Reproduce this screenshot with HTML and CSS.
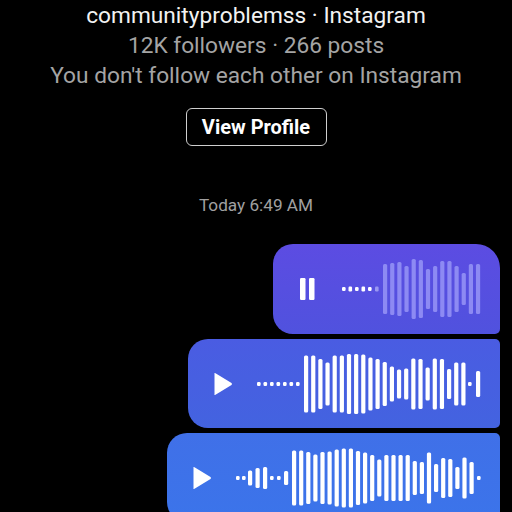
FILE: index.html
```html
<!DOCTYPE html>
<html>
<head>
<meta charset="utf-8">
<link rel="stylesheet" href="styles.css">
</head>
<body>
<div class="header">
  <div class="name">communityproblemss · Instagram</div>
  <div class="meta">12K followers · 266 posts</div>
  <div class="meta">You don't follow each other on Instagram</div>
  <div class="btn">View Profile</div>
  <div class="time">Today 6:49 AM</div>
</div>
<div class="thread">
  <div class="bubble b1">
    <svg class="icon" width="20" height="24" viewBox="0 0 20 24"><rect x="2" y="1" width="5.5" height="22" rx="1.2" fill="#fff"/><rect x="11" y="1" width="5.5" height="22" rx="1.2" fill="#fff"/></svg>
    <svg class="wave" id="w1" width="150" height="70" viewBox="0 0 150 70"></svg>
  </div>
  <div class="bubble b2">
    <svg class="icon" width="20" height="24" viewBox="0 0 20 24"><path d="M1.5 1.5 Q1 0.5 2.5 1.2 L18.5 11 Q19.5 12 18.5 13 L2.5 22.8 Q1 23.5 1.5 22.5 Z" fill="#fff"/></svg>
    <svg class="wave" id="w2" width="230" height="70" viewBox="0 0 230 70"></svg>
  </div>
  <div class="bubble b3">
    <svg class="icon" width="20" height="24" viewBox="0 0 20 24"><path d="M1.5 1.5 Q1 0.5 2.5 1.2 L18.5 11 Q19.5 12 18.5 13 L2.5 22.8 Q1 23.5 1.5 22.5 Z" fill="#fff"/></svg>
    <svg class="wave" id="w3" width="250" height="70" viewBox="0 0 250 70"></svg>
  </div>
</div>
<script src="app.js"></script>
</body>
</html>
```
FILE: styles.css
```css
html, body {
  margin: 0;
  padding: 0;
  background: #000;
  width: 512px;
  height: 512px;
  overflow: hidden;
  font-family: Roboto, "Liberation Sans", sans-serif;
}
.header {
  display: flex;
  flex-direction: column;
  align-items: center;
  padding-top: 1px;
}
.name {
  color: #f2f2f2;
  font-size: 22.7px;
  line-height: 30px;
  white-space: nowrap;
}
.meta {
  color: #a4a4a4;
  font-size: 22.7px;
  line-height: 30px;
  white-space: nowrap;
}
.btn {
  margin-top: 17px;
  box-sizing: border-box;
  width: 141px;
  height: 38px;
  border: 1.5px solid #cfcfcf;
  border-radius: 6px;
  color: #fff;
  font-weight: bold;
  font-size: 20px;
  display: flex;
  align-items: center;
  justify-content: center;
}
.time {
  margin-top: 49px;
  color: #a0a0a0;
  font-size: 17.2px;
  line-height: 20px;
}
.thread {
  margin-top: 29px;
  display: flex;
  flex-direction: column;
  align-items: flex-end;
  padding-right: 12px;
  gap: 5px;
}
.bubble {
  box-sizing: border-box;
  height: 89px;
  display: flex;
  align-items: center;
  padding-left: 25px;
  border-radius: 20px 5px 5px 20px;
}
.b1 {
  width: 227px;
  height: 90px;
  border-radius: 20px 24px 5px 20px;
  background: linear-gradient(180deg, #5c4ce2 0%, #5052de 100%);
}
.b2 {
  width: 312px;
  background: linear-gradient(180deg, #4a5ce2 0%, #4363e0 100%);
}
.b3 {
  width: 333px;
  background: linear-gradient(180deg, #4070e8 0%, #3b74ea 100%);
}
.icon {
  flex: none;
}
.wave {
  flex: none;
  margin-left: 24px;
}
```
FILE: app.js
```js
function build(id, items, color) {
  var svg = document.getElementById(id);
  var ns = 'http://www.w3.org/2000/svg';
  var cy = 35;
  items.forEach(function (it) {
    var r = document.createElementNS(ns, 'rect');
    var h = it.h || 4;
    var w = it.d ? 3.6 : 4.2;
    r.setAttribute('x', it.x);
    r.setAttribute('y', cy - h / 2);
    r.setAttribute('width', w);
    r.setAttribute('height', h);
    r.setAttribute('rx', it.d ? 1.2 : 1.5);
    r.setAttribute('fill', it.c || color);
    svg.appendChild(r);
  });
}
// bubble 1
var a = [];
[0, 6.5, 13, 19.5, 26, 33].forEach(function (x, i) {
  a.push({ x: x, d: true, h: (i % 2 ? 5 : 4), c: i === 5 ? '#9a98f2' : '#fff' });
});
[50, 52, 54, 46, 60, 58, 40, 46, 56, 56, 46, 32, 50, 50].forEach(function (h, i) {
  a.push({ x: 41 + i * 7.15, h: h });
});
build('w1', a, '#8d8af3');
// bubble 2
var b = [];
for (var i = 0; i < 7; i++) b.push({ x: i * 6.5, d: true });
[57, 57, 50, 43, 57, 57, 60, 60, 59, 53, 50, 44, 35, 29, 31, 51, 50, 33, 51, 50, 30, 43, 43].forEach(function (h, i) {
  b.push({ x: 47 + i * 7.15, h: h });
});
b.push({ x: 211, d: true });
b.push({ x: 219, h: 26 });
build('w2', b, '#fff');
// bubble 3
var c = [
  { x: 0, d: true }, { x: 6, d: true }, { x: 12, h: 15 }, { x: 19.5, h: 20 }, { x: 27, h: 22 },
  { x: 34, d: true }, { x: 41, d: true }, { x: 48, h: 14 }
];
[55, 55, 52, 47, 52, 53, 57, 59, 59, 54, 51, 46, 37, 46, 46, 46, 46, 34, 32, 51, 28, 40, 38, 22, 41, 32].forEach(function (h, i) {
  c.push({ x: 56 + i * 7.1, h: h });
});
c.push({ x: 241, d: true });
build('w3', c, '#fff');
```
